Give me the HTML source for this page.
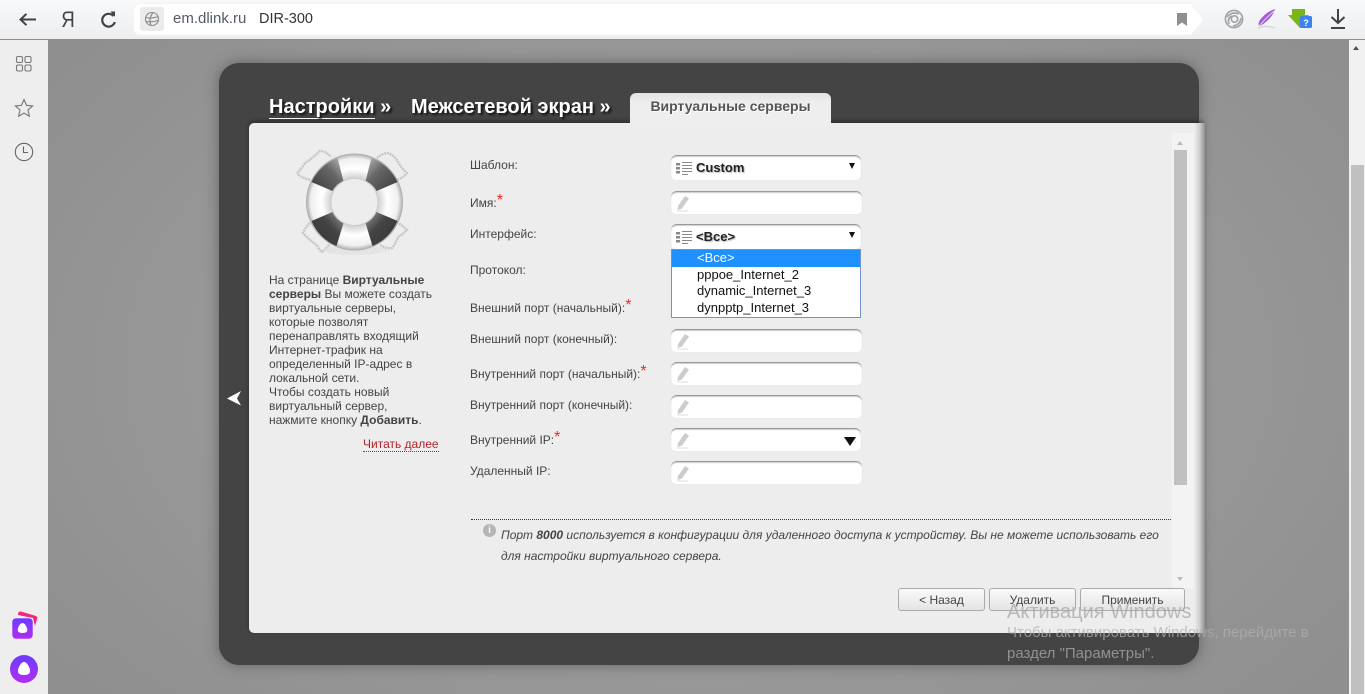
<!DOCTYPE html>
<html><head><meta charset="utf-8"><style>
*{box-sizing:border-box}
html,body{margin:0;padding:0;width:1365px;height:694px;overflow:hidden;font-family:"Liberation Sans","Noto Sans CJK SC",sans-serif;background:#999}
.a{position:absolute}
.lb{position:absolute;left:470px;font-size:12px;color:#444;white-space:nowrap;line-height:14px}
.lb i{position:absolute;font-style:normal;color:#f22;font-size:16px;top:-3px;line-height:16px;margin-left:0}
.inp{position:absolute;left:671px;width:191px;height:23px;background:#fff;border-radius:6px 6px 5px 5px;border-top:1px solid #999;box-shadow:inset 0 1px 1px #ccc,0 0 1px #ddd}
.inp svg{position:absolute;left:5px;top:3px}
.sel{width:190px;height:25px}
.sel .t{position:absolute;left:25px;top:4px;font-size:13px;font-weight:bold;color:#222;text-shadow:1px 1px 1px #bbb;line-height:16px}
.sel .ar{position:absolute;left:178px;top:7px;width:0;height:0;border-left:3.5px solid transparent;border-right:3.5px solid transparent;border-top:6px solid #111}
.sel svg{left:5px;top:4px}
.btn{position:absolute;top:588px;height:23px;background:linear-gradient(#fafafa,#e4e4e4);border:1px solid #aaa;border-radius:3px;font-size:12px;color:#444;text-align:center;line-height:23px}
.side{position:absolute;left:269px;top:273px;width:175px;font-size:12px;line-height:14px;color:#444}
.side div{white-space:nowrap}
</style></head><body>
<div class="a" style="left:48px;top:40px;width:1301px;height:654px;background:radial-gradient(ellipse 800px 500px at 50% 50%,#a6a6a6,#8f8f8f)"></div>

<!-- toolbar -->
<div class="a" style="left:0;top:0;width:1365px;height:40px;background:linear-gradient(#f8f9fa,#eceef0);border-bottom:1px solid #8e8e8e"></div>
<svg class="a" style="left:18px;top:10px" width="20" height="20" viewBox="0 0 20 20" fill="none" stroke="#3d4348" stroke-width="2"><path d="M2.5 9.5H18M8.5 3.800L2.500 9.500L8.500 15.200"/></svg>
<div class="a" style="left:60px;top:8px;font-size:22px;color:#3d4348;line-height:24px;transform:scaleX(.85)">Я</div>
<svg class="a" style="left:99px;top:10px" width="20" height="20" viewBox="0 0 20 20" fill="none" stroke="#3d4348" stroke-width="2.2"><path d="M14.500 6A6.400 6.400 0 1 0 15.800 12"/><path d="M11.500 1.500L16 1.500L16 7Z" fill="#3d4348" stroke="none"/></svg>
<svg class="a" style="left:133px;top:3px" width="1100" height="33" viewBox="0 0 1100 33"><path d="M8 .5H1058L1071 17L1058 32H8Q.5 32 .5 25V8Q.5 .5 8 .5Z" fill="#fff" stroke="#f2f3f4"/></svg>
<div class="a" style="left:140px;top:7px;width:24px;height:24px;background:#ebebeb;border-radius:3px"></div>
<svg class="a" style="left:144px;top:11px" width="16" height="16" viewBox="0 0 16 16" fill="none" stroke="#8a8a8a" stroke-width="1.1"><circle cx="8" cy="8" r="6.500"/><path d="M1.500 6.500Q8 8 14.500 5.500M2 10.500Q8 11.500 14 9.500M9 1.500Q4 8 7 14.500"/></svg>
<div class="a" style="left:173px;top:10px;font-size:15px;color:#555b66;line-height:18px;white-space:nowrap">em.dlink.ru</div>
<div class="a" style="left:259px;top:10px;font-size:14.500px;color:#333;line-height:18px;white-space:nowrap">DIR-300</div>
<svg class="a" style="left:1177px;top:13px" width="10" height="13" viewBox="0 0 10 13"><path d="M0 0H10V13L5 9.500L0 13Z" fill="#8f8f8f"/></svg>
<svg class="a" style="left:1224px;top:9px" width="20" height="20" viewBox="0 0 20 20" fill="none" stroke="#a3a3a3" stroke-width="1.600"><circle cx="10" cy="10" r="8.600"/><circle cx="10.500" cy="10" r="3.200"/><path d="M3 8Q8 2 15 5M17 9Q16 16 9 17M5 15Q3 9 8 7"/></svg>
<svg class="a" style="left:1257px;top:9px" width="20" height="21" viewBox="0 0 20 21"><path d="M18 0Q15 10 3 17Q0 16 3 11Q9 3 18 0Z" fill="#a45bd8"/><path d="M17 2Q10 8 2 17" stroke="#e4cdf4" fill="none"/><path d="M1 19Q8 16 17 19" stroke="#ccc" fill="none"/></svg>
<svg class="a" style="left:1288px;top:9px" width="25" height="20" viewBox="0 0 25 20"><path d="M4 0H17V6H21L12 19L0 6H4Z" fill="#7cb518"/><rect x="12" y="7" width="12" height="12" rx="1.500" fill="#3b82f0"/><text x="18" y="17" font-size="9" font-weight="bold" fill="#fff" text-anchor="middle" font-family="Liberation Sans">?</text></svg>
<svg class="a" style="left:1330px;top:8px" width="16" height="22" viewBox="0 0 16 22" fill="none" stroke="#3d4348" stroke-width="2"><path d="M8 1V15M1.500 9L8 15L14.500 9M1 20H15"/></svg>

<!-- sidebar -->
<div class="a" style="left:0;top:40px;width:48px;height:654px;background:#eee"></div>
<svg class="a" style="left:14px;top:54px" width="20" height="20" viewBox="0 0 20 20" fill="none" stroke="#777" stroke-width="1.100"><rect x="2.500" y="2.500" width="6" height="6" rx="1.500"/><rect x="11" y="2.500" width="6" height="6" rx="1.500"/><rect x="2.500" y="11" width="6" height="6" rx="1.500"/><rect x="11" y="11" width="6" height="6" rx="1.500"/></svg>
<svg class="a" style="left:14px;top:98px" width="20" height="20" viewBox="0 0 20 20" fill="none" stroke="#777" stroke-width="1.100"><path d="M10 1.500L12.500 7.300L18.700 7.900L14 12L15.400 18.200L10 15L4.600 18.200L6 12L1.300 7.900L7.500 7.300Z"/></svg>
<svg class="a" style="left:14px;top:142px" width="20" height="20" viewBox="0 0 20 20" fill="none" stroke="#666" stroke-width="1.100"><circle cx="10" cy="10" r="8.700"/><path d="M9.500 4.500V10.500H14"/></svg>
<svg class="a" style="left:11px;top:610px" width="28" height="30" viewBox="0 0 28 30"><defs><linearGradient id="g" x1="0" y1="0" x2="0" y2="1"><stop offset="0" stop-color="#6a3cff"/><stop offset="1" stop-color="#b52cf5"/></linearGradient></defs><path d="M7 5Q7 1 10 1.500L25 6Q27 7 26 9L24 16L22 8Z" fill="#f5267e"/><rect x="1" y="8" width="21" height="21" rx="4" fill="url(#g)" stroke="#fff" stroke-width=".5"/><path d="M11.500 13Q14 13 16 18Q17.500 23 11.500 23Q5.500 23 7 18Q9 13 11.500 13Z" fill="#fff"/></svg>
<svg class="a" style="left:10px;top:655px" width="28" height="28" viewBox="0 0 28 28"><circle cx="14" cy="14" r="14" fill="url(#g)"/><path d="M14 7Q17 7 19.500 13Q22 20 14 20Q6 20 8.500 13Q11 7 14 7Z" fill="#fff"/></svg>

<!-- main scrollbar -->
<div class="a" style="left:1349px;top:40px;width:16px;height:654px;background:#f1f1f1"></div>
<div class="a" style="left:1351px;top:165px;width:13px;height:529px;background:#c0c0c0"></div>
<div class="a" style="left:1353px;top:46px;width:0;height:0;border-left:3.500px solid transparent;border-right:3.500px solid transparent;border-bottom:4px solid #505050"></div>

<!-- card -->
<div class="a" style="left:219px;top:63px;width:980px;height:602px;background:#444;border-radius:20px;box-shadow:0 0 14px rgba(60,60,60,.55)"></div>
<div class="a" style="left:269px;top:95px;font-size:20px;line-height:24px;font-weight:bold;color:#fff;text-shadow:2px 2px 2px #111;white-space:nowrap"><span style="border-bottom:1px solid #fff">Настройки</span> »</div>
<div class="a" style="left:411px;top:95px;font-size:20px;line-height:24px;font-weight:bold;color:#fff;text-shadow:2px 2px 2px #111;white-space:nowrap">Межсетевой экран »</div>
<svg class="a" style="left:226px;top:390px" width="16" height="16" viewBox="0 0 16 16"><path d="M15 1L1 8.500L15 15.500L11 8.500Z" fill="#fff"/></svg>

<!-- panel -->
<div class="a" style="left:249px;top:123px;width:955px;height:510px;background:#ededed;border-radius:5px 0 0 5px;box-shadow:0 -2px 4px rgba(0,0,0,.35)"></div>
<div class="a" style="left:630px;top:93px;width:201px;height:32px;background:linear-gradient(#e2e2e2,#eee 30%);border-radius:6px 6px 0 0;text-align:center;font-size:14px;font-weight:bold;color:#555;line-height:27px;text-shadow:1px 1px 0 #fff">Виртуальные серверы</div>
<div class="a" style="left:1194px;top:123px;width:11px;height:510px;background:linear-gradient(90deg,#efefef,#d0d0d0 50%,#8f8f8f)"></div>
<div class="a" style="left:1172px;top:133px;width:22px;height:455px;background:#f3f3f3"></div>
<div class="a" style="left:1174px;top:150px;width:13px;height:335px;background:#c0c0c0"></div>
<div class="a" style="left:1177px;top:141px;width:0;height:0;border-left:3.500px solid transparent;border-right:3.500px solid transparent;border-bottom:4px solid #bbb"></div>
<div class="a" style="left:1177px;top:577px;width:0;height:0;border-left:3.500px solid transparent;border-right:3.500px solid transparent;border-top:4px solid #bbb"></div>

<!-- lifebuoy -->
<svg class="a" style="left:295px;top:148px" width="120" height="112" viewBox="0 0 120 112">
<defs><radialGradient id="w" cx=".5" cy=".5" r=".5"><stop offset=".48" stop-color="#cfcfcf"/><stop offset=".68" stop-color="#fff"/><stop offset=".9" stop-color="#f0f0f0"/><stop offset="1" stop-color="#a8a8a8"/></radialGradient>
<linearGradient id="d1" x1="0" y1="1" x2="1" y2="0"><stop offset="0" stop-color="#3a3a3a"/><stop offset=".6" stop-color="#666"/><stop offset="1" stop-color="#bbb"/></linearGradient>
<linearGradient id="d2" x1="1" y1="1" x2="0" y2="0"><stop offset="0" stop-color="#3a3a3a"/><stop offset=".6" stop-color="#666"/><stop offset="1" stop-color="#bbb"/></linearGradient>
<linearGradient id="d3" x1="0" y1="1" x2="1" y2="0"><stop offset="0" stop-color="#333"/><stop offset=".6" stop-color="#444"/><stop offset="1" stop-color="#999"/></linearGradient>
<linearGradient id="d4" x1="1" y1="1" x2="0" y2="0"><stop offset="0" stop-color="#333"/><stop offset=".6" stop-color="#444"/><stop offset="1" stop-color="#999"/></linearGradient></defs>
<g fill="none" stroke="#c6c6c6" stroke-width="2.400" stroke-dasharray="2 .8">
<path d="M15 32Q1 28 3 24Q7 20 10 15Q18 10 25 3Q31 3 36 9"/>
<path d="M82 10Q88 5 93 5Q98 7 102 12Q106 20 112 25Q108 30 102 32"/>
<path d="M15 75Q10 80 8 85Q14 92 22 97Q24 102 27 104Q32 100 35 95"/>
<path d="M85 97Q92 101 97 100Q101 95 103 89Q108 86 112 82Q108 78 103 75"/>
</g>
<ellipse cx="60" cy="102" rx="32" ry="5" fill="#ddd" opacity=".6"/>
<circle cx="59.500" cy="54" r="48.500" fill="url(#w)"/>
<path d="M42.500 10A47 47 0 0 0 16.500 34L37.500 43Q41 36 48.500 33Z" fill="url(#d1)"/>
<path d="M76.500 10A47 47 0 0 1 102.500 34L81.500 43Q78 36 70.500 33Z" fill="url(#d2)"/>
<path d="M16.500 73A47 47 0 0 0 41.500 98L48.500 75Q41 72 37.500 64Z" fill="url(#d3)"/>
<path d="M102.500 73A47 47 0 0 1 77.500 98L70.500 75Q78 72 81.500 64Z" fill="url(#d4)"/>
<circle cx="59.500" cy="54" r="23.500" fill="#ededed" stroke="#ccc" stroke-width="1"/>
</svg>

<!-- side text -->
<div class="side">
<div>На странице <b>Виртуальные</b></div><div><b>серверы</b> Вы можете создать</div><div>виртуальные серверы,</div><div>которые позволят</div><div>перенаправлять входящий</div><div>Интернет-трафик на</div><div>определенный IP-адрес в</div><div>локальной сети.</div><div>Чтобы создать новый</div><div>виртуальный сервер,</div><div>нажмите кнопку <b>Добавить</b>.</div>
</div>
<div class="a" style="left:363px;top:437px;font-size:12px;line-height:14px;color:#b3232a;border-bottom:1px dotted #b3232a;white-space:nowrap">Читать далее</div>

<!-- labels -->
<div class="lb" style="top:158px">Шаблон:</div>
<div class="lb" style="top:196px">Имя:<i>*</i></div>
<div class="lb" style="top:227px">Интерфейс:</div>
<div class="lb" style="top:263px">Протокол:</div>
<div class="lb" style="top:301px">Внешний порт (начальный):<i>*</i></div>
<div class="lb" style="top:332px">Внешний порт (конечный):</div>
<div class="lb" style="top:367px">Внутренний порт (начальный):<i>*</i></div>
<div class="lb" style="top:398px">Внутренний порт (конечный):</div>
<div class="lb" style="top:433px">Внутренний IP:<i>*</i></div>
<div class="lb" style="top:464px">Удаленный IP:</div>

<!-- inputs -->
<div class="inp sel" style="top:155px"><svg width="17" height="17" viewBox="0 0 17 17" fill="#888"><path d="M0 3h4v2.500H0zM0 7h4v2.500H0zM0 11h4v2.500H0zM6 2h10v1H6zM6 5h10v1H6zM6 8h10v1H6zM6 11h10v1H6zM6 14h6v1H6z"/></svg><div class="t">Custom</div><div class="ar"></div></div>
<div class="inp" style="top:191px"><svg width="14" height="17" viewBox="0 0 14 17"><path d="M2 11L9 1L13 3.500L6 13.500L1.500 15Z" fill="#ccc"/><path d="M1 16H12" stroke="#ddd"/></svg></div>
<div class="inp sel" style="top:224px"><svg width="17" height="17" viewBox="0 0 17 17" fill="#888"><path d="M0 3h4v2.500H0zM0 7h4v2.500H0zM0 11h4v2.500H0zM6 2h10v1H6zM6 5h10v1H6zM6 8h10v1H6zM6 11h10v1H6zM6 14h6v1H6z"/></svg><div class="t">&lt;Все&gt;</div><div class="ar"></div></div>
<div class="inp" style="top:329px"><svg width="14" height="17" viewBox="0 0 14 17"><path d="M2 11L9 1L13 3.500L6 13.500L1.500 15Z" fill="#ccc"/><path d="M1 16H12" stroke="#ddd"/></svg></div>
<div class="inp" style="top:362px"><svg width="14" height="17" viewBox="0 0 14 17"><path d="M2 11L9 1L13 3.500L6 13.500L1.500 15Z" fill="#ccc"/><path d="M1 16H12" stroke="#ddd"/></svg></div>
<div class="inp" style="top:395px"><svg width="14" height="17" viewBox="0 0 14 17"><path d="M2 11L9 1L13 3.500L6 13.500L1.500 15Z" fill="#ccc"/><path d="M1 16H12" stroke="#ddd"/></svg></div>
<div class="inp" style="top:428px;width:190px"><svg width="14" height="17" viewBox="0 0 14 17"><path d="M2 11L9 1L13 3.500L6 13.500L1.500 15Z" fill="#ccc"/><path d="M1 16H12" stroke="#ddd"/></svg><div class="a" style="left:173px;top:8px;width:0;height:0;border-left:6px solid transparent;border-right:6px solid transparent;border-top:9px solid #111"></div></div>
<div class="inp" style="top:461px"><svg width="14" height="17" viewBox="0 0 14 17"><path d="M2 11L9 1L13 3.500L6 13.500L1.500 15Z" fill="#ccc"/><path d="M1 16H12" stroke="#ddd"/></svg></div>

<!-- dropdown -->
<div class="a" style="left:671px;top:249px;width:190px;height:69px;background:#fff;border:1px solid #6f93cf;font-size:13px;line-height:16.400px;color:#111">
<div style="height:17px;background:#1e90ff;color:#fff;padding-left:25px;line-height:16px">&lt;Все&gt;</div>
<div style="padding-left:25px">pppoe_Internet_2</div>
<div style="padding-left:25px">dynamic_Internet_3</div>
<div style="padding-left:25px">dynpptp_Internet_3</div>
</div>

<!-- note -->
<div class="a" style="left:471px;top:519px;width:700px;border-top:1px dotted #333"></div>
<div class="a" style="left:483px;top:524px;width:13px;height:13px;border-radius:50%;background:#b5b5b5;color:#fff;font-size:10px;font-weight:bold;line-height:13px;text-align:center">i</div>
<div class="a" style="left:501px;top:525px;font-size:12px;font-style:italic;line-height:21px;color:#444;white-space:nowrap">Порт <b>8000</b> используется в конфигурации для удаленного доступа к устройству. Вы не можете использовать его<br>для настройки виртуального сервера.</div>

<!-- buttons -->
<div class="btn" style="left:898px;width:87px">&lt; Назад</div>
<div class="btn" style="left:989px;width:87px">Удалить</div>
<div class="btn" style="left:1080px;width:105px">Применить</div>

<!-- watermark -->
<div class="a" style="left:1007px;top:600px;font-size:20px;line-height:24px;color:rgba(170,170,170,.8);white-space:nowrap">Активация Windows</div>
<div class="a" style="left:1007px;top:623px;font-size:15px;line-height:20.500px;color:rgba(175,175,175,.72);white-space:nowrap">Чтобы активировать Windows, перейдите в<br>раздел "Параметры".</div>
</body></html>
